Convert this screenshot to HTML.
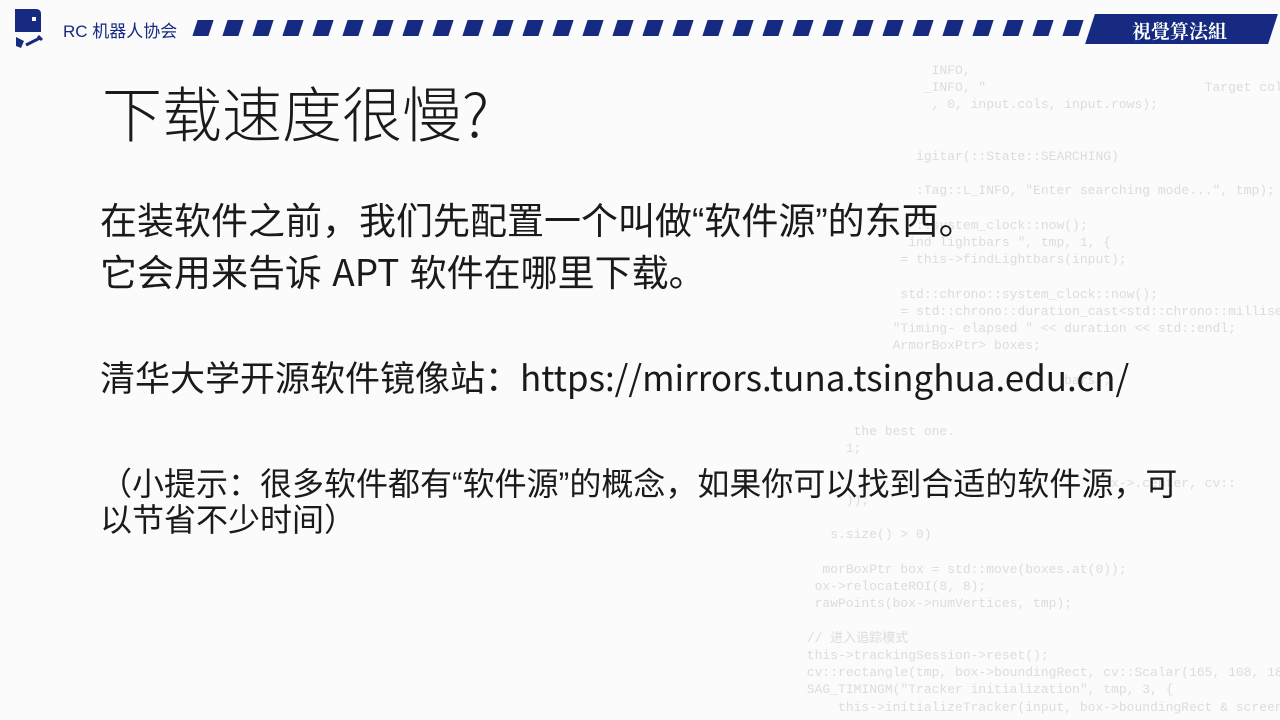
<!DOCTYPE html>
<html><head><meta charset="utf-8"><style>
body{margin:0;width:1280px;height:720px;overflow:hidden;background:#fbfbfb;position:relative;font-family:"Liberation Sans","Noto Sans CJK SC",sans-serif;}
.t{position:absolute;white-space:nowrap;color:#1a1a1a;font-weight:400;}
.n{font-family:"Noto Sans CJK SC",sans-serif;}
.code{position:absolute;font-family:"Liberation Mono",monospace;font-size:13px;color:#dcdcdc;white-space:pre;line-height:17.2px;left:760px;top:62px;width:520px;overflow:hidden;}
.dash{position:absolute;top:20px;width:16px;height:16px;background:#152a80;transform:skewX(-18deg);}
</style></head><body>
<div class="code">                      INFO,
                     _INFO, "                            Target color
                      , 0, input.cols, input.rows);


                    igitar(::State::SEARCHING)

                    :Tag::L_INFO, "Enter searching mode...", tmp);

                    ::system_clock::now();
                   ind lightbars ", tmp, 1, {
                  = this->findLightbars(input);

                  std::chrono::system_clock::now();
                  = std::chrono::duration_cast&lt;std::chrono::millisecon
                 "Timing- elapsed " &lt;&lt; duration &lt;&lt; std::endl;
                 ArmorBoxPtr> boxes;

                                       bars);


            the best one.
           1;

                                             x->.center, cv::
           ));

         s.size() > 0)

        morBoxPtr box = std::move(boxes.at(0));
       ox->relocateROI(8, 8);
       rawPoints(box->numVertices, tmp);

      // 进入追踪模式
      this->trackingSession->reset();
      cv::rectangle(tmp, box->boundingRect, cv::Scalar(165, 108, 18
      SAG_TIMINGM("Tracker initialization", tmp, 3, {
          this->initializeTracker(input, box->boundingRect & screen</div>
<svg style="position:absolute;left:14px;top:8px" width="36" height="42" viewBox="0 0 36 42">
<path d="M1 1 H22 Q27 1 27 6 V24 H1 Z" fill="#152a80"/>
<rect x="18" y="9" width="4" height="4" fill="#fff"/>
<path d="M2 29 L10 33 L7 40 L2 38 Z" fill="#152a80"/>
<path d="M12 37 L22 32 L26 30 M24 28 L28 32" stroke="#152a80" stroke-width="3" fill="none"/>
</svg>
<div class="t" style="left:63px;top:17px;font-size:17px;color:#152a80;font-weight:400">RC 机器人协会</div>
<div id="d"></div>
<div style="position:absolute;left:1090px;top:14px;width:183px;height:30px;background:#152a80;transform:skewX(-18deg)"></div>
<div class="t" style="left:1132px;top:17px;font-size:19px;color:#fff;font-family:'Noto Serif CJK SC',serif;font-weight:700">視覺算法組</div>
<div class="t n" style="left:102px;top:68px;font-size:60px;font-weight:300">下载速度很慢?</div>
<div class="t" style="left:100px;top:191px;font-size:37px;">在装软件之前，我们先配置一个叫做“软件源”的东西。</div>
<div class="t" style="left:100px;top:243px;font-size:37px;">它会用来告诉 <span class="n">APT</span> 软件在哪里下载。</div>
<div class="t n" style="left:100px;top:351px;font-size:35px;">清华大学开源软件镜像站：https://mirrors.tuna.tsinghua.edu.cn/</div>
<div class="t" style="left:100px;top:459px;font-size:32px;">（小提示：很多软件都有“软件源”的概念，如果你可以找到合适的软件源，可</div>
<div class="t" style="left:100px;top:495px;font-size:32px;">以节省不少时间）</div>
<script>
var h='';for(var x=195;x<1080;x+=30)h+='<div class="dash" style="left:'+x+'px"></div>';document.getElementById('d').innerHTML=h;
</script>
</body></html>
